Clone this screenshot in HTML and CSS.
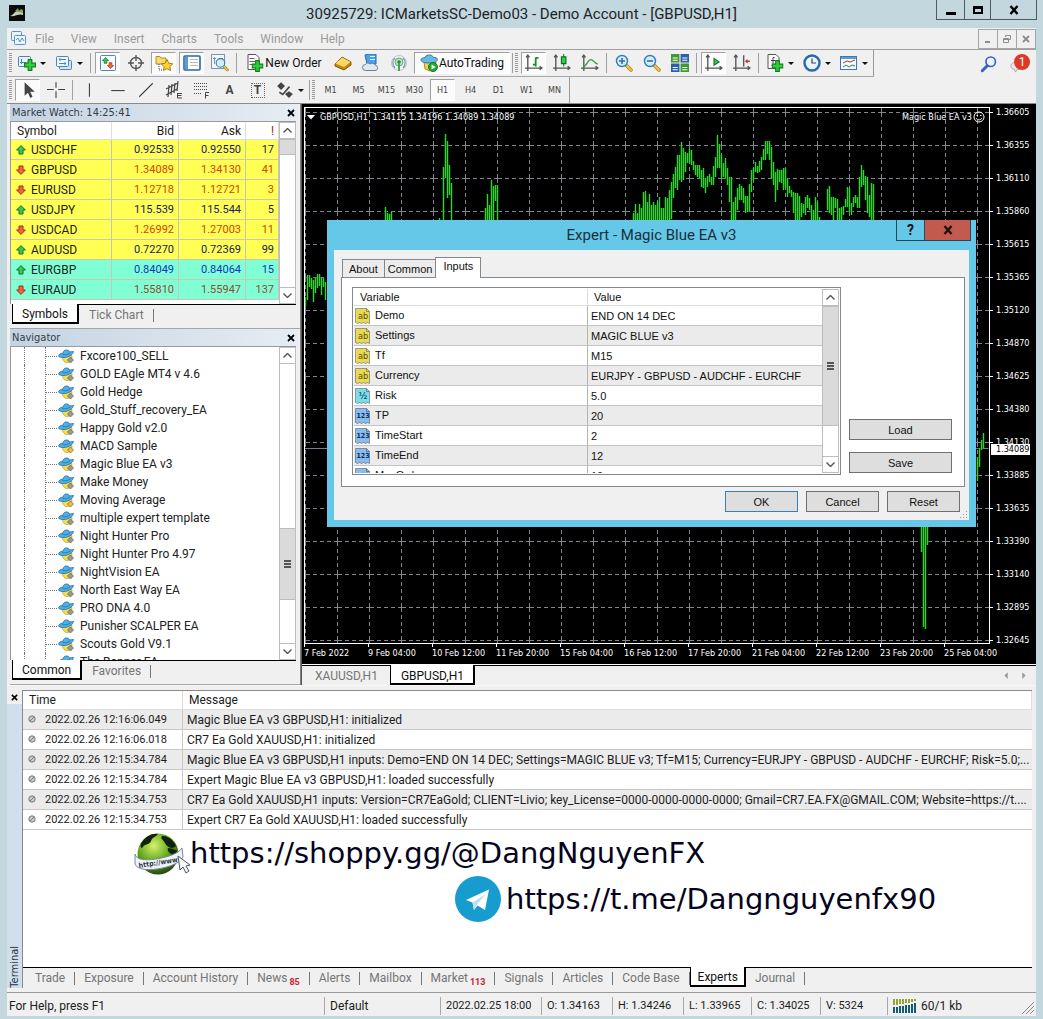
FILE: index.html
```html
<!DOCTYPE html>
<html lang="en">
<head>
<meta charset="utf-8">
<meta name="viewport" content="width=device-width, initial-scale=1">
<title>30925729: ICMarketsSC-Demo03 - Demo Account - [GBPUSD,H1]</title>
<link rel="stylesheet" href="styles.css">
</head>
<body>
<svg class="defs" aria-hidden="true">
  <defs>
    <symbol id="up" viewBox="0 0 10 10"><path d="M5 .6 9.4 5H7v4H3V5H.6z" fill="#3cc84a" stroke="#14702a"/></symbol>
    <symbol id="down" viewBox="0 0 10 10"><path d="M5 9.4 9.4 5H7V1H3v4H.6z" fill="#f4653a" stroke="#a82c14"/></symbol>
    <symbol id="ea" viewBox="0 0 16 14"><path d="M4 6c0 4 2 7 5 7s5-3 5-7z" fill="#f3dc4e" stroke="#b59a20" stroke-width=".7"/><path d="M.5 6.500C1 4.500 3 4 5 3.600 5.500 1 7 .5 8.500.5S11 1 11.500 2.500l4-.5c-.5 3-5 6-9.500 6-3 0-5-.5-5.500-1.500z" fill="#4fb0e8" stroke="#1f6f9e" stroke-width=".8"/><path d="M4.500 5c2.500.8 5 .2 7.500-1.500" fill="none" stroke="#1f6f9e" stroke-width=".8"/></symbol>
    <symbol id="diag" viewBox="0 0 16 14"><path d="m12.500 7.500 3 3-3 3-3-3z" fill="currentColor" stroke="#5f5f55" stroke-width=".7"/></symbol>
    <symbol id="scroll-up" viewBox="0 0 9 5"><path d="m.5 4.500 4-4 4 4" fill="none" stroke="#555" stroke-width="1.400"/></symbol>
    <symbol id="scroll-down" viewBox="0 0 9 5"><path d="m.5.5 4 4 4-4" fill="none" stroke="#555" stroke-width="1.400"/></symbol>
    <symbol id="x" viewBox="0 0 8 8"><path d="m1 1 6 6M7 1 1 7" stroke="currentColor" stroke-width="1.800"/></symbol>
    <symbol id="plus" viewBox="0 0 10 10"><path d="M3.500.5h3v3h3v3h-3v3h-3v-3h-3v-3h3z" fill="#2fd13c" stroke="#12801c"/></symbol>
    <symbol id="note" viewBox="0 0 16 16"><path d="M.5.5h11l3 3v12l-2-1-2 1-2-1-2 1-2-1-2 1-2-1z" fill="currentColor" stroke="#0005"/><path d="M11.500.5v3h3" fill="none" stroke="#0005"/></symbol>
    <symbol id="off" viewBox="0 0 8 8"><circle cx="4" cy="4" r="3.200" fill="#c8c8c8" stroke="#7d7d7d"/><path d="m2 6 4-4" stroke="#7d7d7d"/></symbol>
    <symbol id="glass" viewBox="0 0 18 18"><path d="m11 11 5 5" stroke="#a97a10" stroke-width="3.400" stroke-linecap="round"/><path d="m11 11 5 5" stroke="#f1c94b" stroke-width="2" stroke-linecap="round"/><circle cx="7" cy="7" r="5.500" fill="#d6ecfb" stroke="#2f7cc0" stroke-width="1.400"/></symbol>
    <symbol id="axes" viewBox="0 0 16 16"><path d="M2.500 1v14M0 12.500h15M1 3l1.500-2L4 3M13 11l2 1.500L13 14" fill="none" stroke="#555" stroke-width="1.200"/></symbol>
  </defs>
</svg>

<div class="window">
  <header class="titlebar">
    <svg class="app-icon" viewBox="0 0 16 16"><path fill="#0b0b0b" d="M0 0h16v16H0z"/><path d="M1 11c4-1 4-5 8-5l5-1v5c-4-2-8 2-13 1z" fill="#c8cfc0"/><path d="m6 6 3-3 1 3 2-2 2 1v3z" fill="#7ea052"/></svg>
    <h1>30925729: ICMarketsSC-Demo03 - Demo Account - [GBPUSD,H1]</h1>
    <div class="win-buttons">
      <button aria-label="Minimize"><svg viewBox="0 0 12 12"><path d="M1 8h10v3H1z"/></svg></button><button aria-label="Maximize"><svg viewBox="0 0 12 12"><path d="M1 2h10v8H1zm2 3v3h6V5z" fill-rule="evenodd"/></svg></button><button class="wide" aria-label="Close"><svg viewBox="0 0 12 12"><path d="m2.500 2 7 8m0-8-7 8" stroke="#000" stroke-width="2.400"/></svg></button>
    </div>
  </header>

  <nav class="menubar" aria-label="Main menu">
    <svg class="menu-icon" viewBox="0 0 15 15"><rect x=".5" y=".5" width="10" height="9" rx="1" fill="#eaf4fc" stroke="#5b93c4"/><rect x="3.500" y="4.500" width="11" height="9" rx="1" fill="#eaf4fc" stroke="#5b93c4"/><path d="m5 9 2-2 2 4 2-4 2 3" fill="none" stroke="#5b93c4"/></svg>
    <button>File</button><button>View</button><button>Insert</button><button>Charts</button><button>Tools</button><button>Window</button><button>Help</button>
    <div class="mdi-buttons">
      <button aria-label="Minimize chart"><svg viewBox="0 0 10 10"><path d="M2 7h5v2H2z"/></svg></button><button aria-label="Restore chart"><svg viewBox="0 0 10 10"><path d="M3.500 3V1.500h5v4H7M1.500 4.500h5v4h-5zM1.500 5.500h5" fill="none" stroke="#8d8d8d"/></svg></button><button aria-label="Close chart"><svg viewBox="0 0 10 10"><path d="m2 2 6 6m0-6L2 8" stroke="#8d8d8d" stroke-width="1.800"/></svg></button>
    </div>
  </nav>

  <div class="toolrow">
    <div class="toolbar">
      <i class="grip"></i>
      <button class="tb dd" aria-label="New chart"><svg viewBox="0 0 18 16"><rect x=".5" y="1.500" width="12" height="10" rx="1" fill="#e6f2fb" stroke="#4b86bd"/><path d="M3.500 4v5M2 7.500h6" stroke="#4b86bd"/><use href="#plus" x="6" y="4" width="12" height="12"/></svg></button>
      <button class="tb dd" aria-label="Profiles"><svg viewBox="0 0 18 16"><rect x="4.500" y="5.500" width="12" height="9" rx="1" fill="#cfe3f5" stroke="#4b86bd"/><rect x="1.500" y="1.500" width="12" height="10" rx="1" fill="#eef6fc" stroke="#4b86bd"/><path d="M4 4.500h7M4 8.500h7M5 3v3M10 7v3" stroke="#4b86bd"/></svg></button>
      <i class="sep"></i>
      <button class="tb on" aria-label="Market Watch"><svg viewBox="0 0 18 16"><rect x="1.500" y=".5" width="15" height="15" rx="1" fill="#f7fbff" stroke="#4b86bd"/><use href="#up" x="3" y="2" width="7" height="7"/><use href="#down" x="8" y="7" width="7" height="7"/></svg></button>
      <button class="tb" aria-label="Data Window"><svg viewBox="0 0 18 18"><circle cx="9" cy="9" r="5.500" fill="none" stroke="#555" stroke-width="1.400"/><path d="M9 1v6M9 11v6M1 9h6M11 9h6" stroke="#555" stroke-width="1.400"/></svg></button>
      <button class="tb on" aria-label="Navigator"><svg viewBox="0 0 18 18"><path d="M1 2.500h4l1 1.500h5v6H1z" fill="#f6dc70" stroke="#b8901c"/><path d="M4 10v6h3" fill="none" stroke="#444" stroke-dasharray="1 1"/><path d="m12 5.500 1.800 3.800 4 .5-3 2.800.8 4-3.600-2-3.600 2 .8-4-3-2.800 4-.5z" fill="#ffd23c" stroke="#b07c10"/></svg></button>
      <button class="tb on" aria-label="Terminal"><svg viewBox="0 0 18 16"><rect x="1" y="1" width="16" height="14" rx="1" fill="#fff" stroke="#2868a8" stroke-width="1.600"/><path d="M2 2h3v12H2z" fill="#5c9bd4"/><path d="M7 4.500h8M7 7.500h8M7 10.500h8" stroke="#bbb"/></svg></button>
      <button class="tb" aria-label="Strategy Tester"><svg viewBox="0 0 18 18"><rect x=".5" y=".5" width="13" height="14" fill="#f3f7fa" stroke="#7a94ab"/><path d="M2 4.500h3M8 4.500h4M3.500 3v7" stroke="#7a94ab"/><use href="#glass" x="4" y="3" width="14" height="15"/></svg></button>
      <i class="sep"></i>
      <button class="tb text order"><svg viewBox="0 0 17 18"><path d="M1.500.5h8l3 3v12h-11z" fill="#fff" stroke="#555"/><path d="M3 4.500h5M3 7.500h7M3 10.500h5" stroke="#666"/><use href="#plus" x="5" y="6" width="12" height="12"/></svg>New Order</button>
      <button class="tb" aria-label="MetaEditor"><svg viewBox="0 0 18 16"><path d="m1 9 7-7 9 5v3l-7 5-9-4z" fill="#c48512" stroke="#8a5a08"/><path d="m1.500 8.500 6.500-6 8.500 4.500-6.500 5z" fill="#ffd965"/></svg></button>
      <button class="tb" aria-label="MQL5 Cloud"><svg viewBox="0 0 18 18"><path d="m3 1 3-1h8v10H5z" fill="#49a2ea" stroke="#1f6cb0"/><path d="M8 2.500h5M8 5.500h5" stroke="#dff"/><path d="M3.500 16.500a3 3 0 0 1 0-6c1-2 3.500-2 4.500-.5 2-1.500 4.500-.5 5 1 3 0 4 5.500 0 5.500z" fill="#dfe7f0" stroke="#6a7f99"/></svg></button>
      <button class="tb" aria-label="Signals"><svg viewBox="0 0 18 18"><circle cx="9" cy="9" r="7.500" fill="#eef3f5" stroke="#b8c6cf"/><path d="M5 4a7 7 0 0 0 0 10M13 4a7 7 0 0 1 0 10" fill="none" stroke="#7f9cb4" stroke-width="1.300"/><circle cx="9" cy="8" r="4" fill="#bfe0c0" stroke="#6fae78"/><circle cx="9" cy="8" r="1.800" fill="#2a8f3c"/><path d="M9 9v8" stroke="#3fa64f" stroke-width="2"/></svg></button>
      <button class="tb text on auto"><svg viewBox="0 0 18 18"><path d="m4 8 1 7 5 2 5-4 1-5z" fill="#f1cf48" stroke="#b08d1e"/><path d="M1 6c0-2 2-2 4-2.500C6 1 8 1 9.500 1s3 .5 4 2.500c2 0 4 .5 4 2C17 8 13 9 9 9S1 8 1 6z" fill="#6ab7e4" stroke="#2f78a5"/><circle cx="13" cy="13" r="4.500" fill="#25a83a" stroke="#0f7a22"/><path d="m11.600 10.600 4 2.400-4 2.400z" fill="#fff"/></svg>AutoTrading</button>
      <i class="sep edge"></i>
      <i class="grip"></i>
      <button class="tb on" aria-label="Bar chart"><svg viewBox="0 0 16 16"><use href="#axes"/><path d="M9.500 3v8M9.500 3.500H12M7 9.500h2.500" stroke="#1c8a2c" stroke-width="1.600"/></svg></button>
      <button class="tb" aria-label="Candlesticks"><svg viewBox="0 0 16 16"><use href="#axes"/><path d="M9.500 0v11" stroke="#1c8a2c"/><path d="M7.500 2.500h4v6h-4z" fill="#2fce48" stroke="#12701f"/></svg></button>
      <button class="tb" aria-label="Line chart"><svg viewBox="0 0 16 16"><use href="#axes"/><path d="M2 11c3 0 4-6 6.500-6S12 8 15 9" fill="none" stroke="#3a9c4a" stroke-width="1.200"/></svg></button>
      <i class="sep"></i>
      <button class="tb" aria-label="Zoom in"><svg viewBox="0 0 18 18"><use href="#glass"/><path d="M4 7h6M7 4v6" stroke="#2f6fb4" stroke-width="1.600"/></svg></button>
      <button class="tb" aria-label="Zoom out"><svg viewBox="0 0 18 18"><use href="#glass"/><path d="M4 7h6" stroke="#2f6fb4" stroke-width="1.600"/></svg></button>
      <button class="tb" aria-label="Tile windows"><svg viewBox="0 0 16 16"><path d="M0 0h7.500v7.500H0zM8.500 8.500H16V16H8.500z" fill="#3f9a2e"/><path d="M8.500 0H16v7.500H8.500zM0 8.500h7.500V16H0z" fill="#2c5fae"/><path d="M1.500 3h4.500v1H1.500zm0 2h4.500v1H1.500zM10 3h4.500v1H10zm0 2h4.500v1H10zM1.500 11.500h4.500v1H1.500zm0 2h4.500v1H1.500zM10 11.500h4.500v1H10zm0 2h4.500v1H10z" fill="#fff"/></svg></button>
      <i class="sep"></i>
      <button class="tb on" aria-label="Auto scroll"><svg viewBox="0 0 16 16"><use href="#axes"/><path d="m8 4 4.500 3L8 10z" fill="#3fc455" stroke="#177a28"/></svg></button>
      <button class="tb" aria-label="Chart shift"><svg viewBox="0 0 16 16"><use href="#axes"/><path d="M9.500 1v10" stroke="#555" stroke-width="1.200"/><path d="M15 6.500h-3" stroke="#c0392b" stroke-width="1.400"/><path d="M10.500 6.500 13 4.500v4z" fill="#c0392b"/></svg></button>
      <i class="sep"></i>
      <button class="tb dd" aria-label="Indicators"><svg viewBox="0 0 17 18"><path d="M1.500.5h8l3 3v11h-11z" fill="#fff" stroke="#555"/><path d="M8 3.500H6.500v8H5M4.500 6.500h4" fill="none" stroke="#444"/><use href="#plus" x="5" y="6" width="12" height="12"/></svg></button>
      <button class="tb dd" aria-label="Periods"><svg viewBox="0 0 18 18"><circle cx="9" cy="9" r="7.500" fill="#e8f4fd" stroke="#2767ae" stroke-width="2.400"/><path d="M9 4.500V9h4" fill="none" stroke="#444" stroke-width="1.200"/></svg></button>
      <button class="tb dd" aria-label="Templates"><svg viewBox="0 0 18 16"><rect x=".5" y="1.500" width="16" height="13" fill="#f4faff" stroke="#4078ad"/><path d="M1 2h15v2H1z" fill="#5f9bd0"/><path d="m3 8 4-2 3 1 5-2" fill="none" stroke="#a04020"/><path d="m3 12 3-2 3 2 3-2 3 1" fill="none" stroke="#2b8a3a"/></svg></button>
    </div>
    <div class="tool-right">
      <button class="tb bare" aria-label="Search"><svg viewBox="0 0 16 16"><path d="m7 9-5 5" stroke="#3a62c4" stroke-width="2.600" stroke-linecap="round"/><circle cx="9.500" cy="6" r="4.200" fill="#eef4ff" stroke="#3a62c4" stroke-width="1.500"/></svg></button>
      <button class="tb bare bell" aria-label="Notifications"><svg viewBox="0 0 20 20"><path d="M1 12c0-3 3-4 6-4s6 1 6 4-3 4-5 4l-2 3-1-3c-2 0-4-1-4-4z" fill="#e4e6ea" stroke="#a8a8a8"/></svg><span class="badge">1</span></button>
    </div>
  </div>

  <div class="toolrow second">
    <div class="toolbar">
      <i class="grip"></i>
      <button class="tb on" aria-label="Cursor"><svg viewBox="0 0 16 16"><path d="M5 1v12l3-2.500 2 4.500 2-1-2-4.500h4z" fill="#444"/></svg></button>
      <button class="tb" aria-label="Crosshair"><svg viewBox="0 0 16 16"><path d="M8 1v5M8 9v6M0 7.500h6M10 7.500h6" stroke="#444"/></svg></button>
      <i class="sep"></i>
      <button class="tb" aria-label="Vertical line"><svg viewBox="0 0 16 16"><path d="M7.500 2v12" stroke="#444"/></svg></button>
      <button class="tb" aria-label="Horizontal line"><svg viewBox="0 0 16 16"><path d="M2 8.500h12" stroke="#444"/></svg></button>
      <button class="tb" aria-label="Trendline"><svg viewBox="0 0 16 16"><path d="m2 14 12-12" stroke="#444"/></svg></button>
      <button class="tb" aria-label="Equidistant channel"><svg viewBox="0 0 18 18"><path d="m1 8 12-6M1 14l11-6M4 4l-1 12M7 3 6 14M10 2 9 12M13 0l-1 10" stroke="#444" stroke-width="1.200"/><path d="M12.500 12v5H17M12.500 12.500H17M12.500 14.500h4" fill="none" stroke="#444"/></svg></button>
      <button class="tb" aria-label="Fibonacci retracement"><svg viewBox="0 0 18 18"><path d="M1 2.500h14M1 5.500h14M1 8.500h14M1 12.500h8" stroke="#444" stroke-dasharray="1 1"/><path d="M12.500 17.500v-6H16M12.500 14.500h3" fill="none" stroke="#444"/></svg></button>
      <button class="tb letter">A</button>
      <button class="tb letter"><span class="boxed">T</span></button>
      <button class="tb dd" aria-label="Arrows"><svg viewBox="0 0 16 16"><path d="M1 4.500 4.500 1 8 4.500 4.500 8zM15 11.500 11.500 15 8 11.500 11.500 9z" fill="#444"/><path d="m3 10 3 2 6-7" fill="none" stroke="#444" stroke-width="1.400"/></svg></button>
      <i class="sep edge"></i>
      <i class="grip"></i>
      <button class="tb tf">M1</button><button class="tb tf">M5</button><button class="tb tf">M15</button><button class="tb tf">M30</button><button class="tb tf on">H1</button><button class="tb tf">H4</button><button class="tb tf">D1</button><button class="tb tf">W1</button><button class="tb tf">MN</button>
    </div>
  </div>

  <div class="workspace">
    <aside class="dock">
      <section class="panel">
        <h2 class="caption"><span>Market Watch: 14:25:41</span><button aria-label="Close Market Watch"><svg viewBox="0 0 8 8"><use href="#x"/></svg></button></h2>
        <div class="panel-body market">
          <div class="quotes-box">
          <table class="quotes">
            <thead><tr><th>Symbol</th><th>Bid</th><th>Ask</th><th class="warn">!</th></tr></thead>
            <tbody>
              <tr class="rise"><td><svg><use href="#up"/></svg>USDCHF</td><td>0.92533</td><td>0.92550</td><td>17</td></tr>
              <tr class="fall"><td><svg><use href="#down"/></svg>GBPUSD</td><td>1.34089</td><td>1.34130</td><td>41</td></tr>
              <tr class="fall"><td><svg><use href="#down"/></svg>EURUSD</td><td>1.12718</td><td>1.12721</td><td>3</td></tr>
              <tr class="rise"><td><svg><use href="#up"/></svg>USDJPY</td><td>115.539</td><td>115.544</td><td>5</td></tr>
              <tr class="fall"><td><svg><use href="#down"/></svg>USDCAD</td><td>1.26992</td><td>1.27003</td><td>11</td></tr>
              <tr class="rise"><td><svg><use href="#up"/></svg>AUDUSD</td><td>0.72270</td><td>0.72369</td><td>99</td></tr>
              <tr class="rise cross"><td><svg><use href="#up"/></svg>EURGBP</td><td>0.84049</td><td>0.84064</td><td>15</td></tr>
              <tr class="fall cross"><td><svg><use href="#down"/></svg>EURAUD</td><td>1.55810</td><td>1.55947</td><td>137</td></tr>
            </tbody>
          </table>
          </div>
          <div class="scrollbar"><button aria-label="Scroll up"><svg><use href="#scroll-up"/></svg></button><i class="thumb small"></i><i class="track"></i><button aria-label="Scroll down"><svg><use href="#scroll-down"/></svg></button></div>
        </div>
        <div class="tabs"><button class="active">Symbols</button><button>Tick Chart</button></div>
      </section>

      <section class="panel grow">
        <h2 class="caption"><span>Navigator</span><button aria-label="Close Navigator"><svg viewBox="0 0 8 8"><use href="#x"/></svg></button></h2>
        <div class="panel-body navigator">
          <ul class="tree">
            <li><svg><use href="#ea"/><use href="#diag"/></svg>Fxcore100_SELL</li>
            <li><svg><use href="#ea"/><use href="#diag"/></svg>GOLD EAgle MT4 v 4.6</li>
            <li><svg><use href="#ea"/><use href="#diag"/></svg>Gold Hedge</li>
            <li><svg><use href="#ea"/><use href="#diag"/></svg>Gold_Stuff_recovery_EA</li>
            <li><svg><use href="#ea"/><use href="#diag"/></svg>Happy Gold v2.0</li>
            <li class="source"><svg><use href="#ea"/><use href="#diag"/></svg>MACD Sample</li>
            <li><svg><use href="#ea"/><use href="#diag"/></svg>Magic Blue EA v3</li>
            <li><svg><use href="#ea"/><use href="#diag"/></svg>Make Money</li>
            <li class="source"><svg><use href="#ea"/><use href="#diag"/></svg>Moving Average</li>
            <li><svg><use href="#ea"/><use href="#diag"/></svg>multiple expert template</li>
            <li><svg><use href="#ea"/><use href="#diag"/></svg>Night Hunter Pro</li>
            <li><svg><use href="#ea"/><use href="#diag"/></svg>Night Hunter Pro 4.97</li>
            <li><svg><use href="#ea"/><use href="#diag"/></svg>NightVision EA</li>
            <li><svg><use href="#ea"/><use href="#diag"/></svg>North East Way EA</li>
            <li><svg><use href="#ea"/><use href="#diag"/></svg>PRO DNA 4.0</li>
            <li><svg><use href="#ea"/><use href="#diag"/></svg>Punisher SCALPER EA</li>
            <li><svg><use href="#ea"/><use href="#diag"/></svg>Scouts Gold V9.1</li>
            <li><svg><use href="#ea"/><use href="#diag"/></svg>The Banner EA</li>
          </ul>
          <div class="scrollbar"><button aria-label="Scroll up"><svg><use href="#scroll-up"/></svg></button><i class="track above"></i><i class="thumb gripped"></i><i class="track"></i><button aria-label="Scroll down"><svg><use href="#scroll-down"/></svg></button></div>
        </div>
        <div class="tabs"><button class="active">Common</button><button>Favorites</button></div>
      </section>
    </aside>

    <main class="chart-pane">
      <div class="chart">
        <div class="plot">
          <svg class="plot-svg">
            <defs>
              <pattern id="grid" x="1" y="-28" width="32" height="33" patternUnits="userSpaceOnUse"><path d="M31.500 0v33M0 32.500h32" stroke="#7e8790" stroke-dasharray="4 3" fill="none"/></pattern>
              <path id="bars" fill="none" d="M306 297V306M308 275V300M310 275V287M312 278V289M314 280V302M316 278V293M318 274V288M320 274V286M322 278V295M324 278V287M326 282V300
              M386 207V220M388 213V220M390 214V220M392 212V220M440 218V222M444 167V220M446 134V178M448 141V198M450 165V195M452 183V220
              M486 208V220M488 194V220M490 205V220M492 180V220M494 186V220M496 185V201M498 185V220
              M634 213V220M636 204V220M638 213V220M640 204V220M642 208V220M644 192V220M646 191V220M648 202V220M650 194V220M652 205V220M654 202V220M656 205V220M658 202V220M660 197V220M662 208V220M664 208V220M666 197V220M668 198V220M670 190V220M672 182V219M674 174V198M676 167V188M678 155V190M680 155V180M682 142V182M684 148V180M686 152V172M688 153V163M690 149V163M692 150V165M694 161V170M696 165V175M698 165V177M700 165V178M702 170V187M704 168V188M706 178V193M708 176V187M710 174V182M712 177V185M714 166V185M716 157V177M718 135V168M720 144V168M722 155V178M724 163V177M726 158V178M728 168V185M730 177V202M732 177V220M734 202V220M736 197V220M738 188V210M740 184V200M742 186V200M744 188V203M746 196V213M748 196V212M750 184V212M752 170V192M754 168V180M756 162V172M758 166V173M760 161V172M762 157V170M764 149V160M766 141V160M768 141V154M770 141V160M772 147V178M774 162V185M776 172V202M778 169V190M780 170V182M782 170V183M784 168V190M786 168V188M788 178V197M790 186V193M792 190V197M794 192V213M796 193V220M798 193V220M800 196V220M802 203V217M804 204V213M806 197V215M808 195V208M810 198V210M812 205V220M814 210V220M816 197V220M818 202V220M820 217V220M828 189V210M830 186V213M832 197V215M834 197V220M836 198V208M838 199V220M840 208V220M842 207V220M844 206V215M846 199V207M848 187V207M850 188V212M852 203V215M854 197V207M856 195V203M858 197V208M860 177V208M862 165V187M864 170V185M866 176V200M868 177V213M870 195V217M872 183V220M874 184V220
              M922 520V552M924 520V627M926 526V629M928 520V545M978 457V481M980 448V467M982 440V450M984 433V448"/>
            </defs>
            <rect width="100%" height="100%" fill="url(#grid)"/>
            <g transform="translate(-305.500 -108)">
              <path stroke="#77808a" d="M305 448.500H989"/>
              <use href="#bars" stroke="#075c07" stroke-width="2"/>
              <use href="#bars" stroke="#22dd22"/>
            </g>
          </svg>
          <p class="ohlc"><svg viewBox="0 0 8 5"><path d="M0 0h8L4 4.500z" fill="#fff"/></svg><span>GBPUSD,H1</span><span>1.34115 1.34196 1.34089 1.34089</span></p>
          <p class="ea-name">Magic Blue EA v3<svg viewBox="0 0 12 12"><circle cx="6" cy="6" r="5" fill="none" stroke="#fff"/><path d="M3.500 4.500h1.500M7 4.500h1.500M3 7c1.500 2.500 4.500 2.500 6 0" fill="none" stroke="#fff"/></svg></p>
        </div>
        <div class="prices">
          <span>1.36605</span><span>1.36355</span><span>1.36110</span><span>1.35860</span><span>1.35615</span><span>1.35365</span><span>1.35120</span><span>1.34870</span><span>1.34625</span><span>1.34380</span><span>1.34130</span><span>1.33885</span><span>1.33635</span><span>1.33390</span><span>1.33140</span><span>1.32895</span><span>1.32645</span>
          <b class="last">1.34089</b>
        </div>
        <div class="dates">
          <span>7 Feb 2022</span><span>9 Feb 04:00</span><span>10 Feb 12:00</span><span>11 Feb 20:00</span><span>15 Feb 04:00</span><span>16 Feb 12:00</span><span>17 Feb 20:00</span><span>21 Feb 04:00</span><span>22 Feb 12:00</span><span>23 Feb 20:00</span><span>25 Feb 04:00</span>
        </div>
      </div>
      <div class="tabs chart-tabs"><button>XAUUSD,H1</button><button class="active">GBPUSD,H1</button>
        <div class="pager"><button aria-label="Previous"><svg viewBox="0 0 6 8"><path d="M5 1v6L2 4z"/></svg></button><button aria-label="Next"><svg viewBox="0 0 6 8"><path d="M1 1v6l3-3z"/></svg></button></div>
      </div>

      <div class="dialog" role="dialog" aria-labelledby="dlg-title">
        <header class="dlg-title"><h2 id="dlg-title">Expert - Magic Blue EA v3</h2>
          <div class="dlg-buttons"><button>?</button><button class="close" aria-label="Close"><svg viewBox="0 0 12 12"><path d="m2.500 2 7 8m0-8-7 8" stroke="#1d1210" stroke-width="2.400"/></svg></button></div>
        </header>
        <div class="dlg-body">
          <div class="dlg-tabs"><button>About</button><button>Common</button><button class="active">Inputs</button></div>
          <div class="dlg-page">
            <div class="inputs-box">
              <div class="inputs-scroll">
                <table class="inputs">
                  <thead><tr><th>Variable</th><th>Value</th></tr></thead>
                  <tbody>
                    <tr><td><span class="kind str"><svg><use href="#note"/></svg><em>ab</em></span>Demo</td><td>END ON 14 DEC</td></tr>
                    <tr><td><span class="kind str"><svg><use href="#note"/></svg><em>ab</em></span>Settings</td><td>MAGIC BLUE v3</td></tr>
                    <tr><td><span class="kind str"><svg><use href="#note"/></svg><em>ab</em></span>Tf</td><td>M15</td></tr>
                    <tr><td><span class="kind str"><svg><use href="#note"/></svg><em>ab</em></span>Currency</td><td>EURJPY - GBPUSD - AUDCHF - EURCHF</td></tr>
                    <tr><td><span class="kind dbl"><svg><use href="#note"/></svg><em>½</em></span>Risk</td><td>5.0</td></tr>
                    <tr><td><span class="kind int"><svg><use href="#note"/></svg><em>123</em></span>TP</td><td>20</td></tr>
                    <tr><td><span class="kind int"><svg><use href="#note"/></svg><em>123</em></span>TimeStart</td><td>2</td></tr>
                    <tr><td><span class="kind int"><svg><use href="#note"/></svg><em>123</em></span>TimeEnd</td><td>12</td></tr>
                    <tr><td><span class="kind int"><svg><use href="#note"/></svg><em>123</em></span>MaxOrders</td><td>10</td></tr>
                  </tbody>
                </table>
              </div>
              <div class="scrollbar"><button aria-label="Scroll up"><svg><use href="#scroll-up"/></svg></button><i class="thumb gripped long"></i><i class="track"></i><button aria-label="Scroll down"><svg><use href="#scroll-down"/></svg></button></div>
            </div>
            <div class="side-buttons"><button class="push">Load</button><button class="push">Save</button></div>
          </div>
          <footer class="dlg-footer"><button class="push default">OK</button><button class="push">Cancel</button><button class="push">Reset</button></footer>
          <svg class="dlg-grip" viewBox="0 0 9 9"><path d="M7 1h1v1H7zM4 4h1v1H4zM7 4h1v1H7zM1 7h1v1H1zM4 7h1v1H4zM7 7h1v1H7z" fill="#999"/></svg>
        </div>
      </div>
    </main>
  </div>

  <section class="terminal">
    <div class="rail"><button aria-label="Close Terminal"><svg viewBox="0 0 8 8"><use href="#x"/></svg></button><div class="rail-name"><span>Terminal</span></div></div>
    <div class="terminal-main">
      <div class="log-area">
        <table class="log">
          <thead><tr><th>Time</th><th>Message</th></tr></thead>
          <tbody>
            <tr><td><svg><use href="#off"/></svg>2022.02.26 12:16:06.049</td><td>Magic Blue EA v3 GBPUSD,H1: initialized</td></tr>
            <tr><td><svg><use href="#off"/></svg>2022.02.26 12:16:06.018</td><td>CR7 Ea Gold XAUUSD,H1: initialized</td></tr>
            <tr><td><svg><use href="#off"/></svg>2022.02.26 12:15:34.784</td><td>Magic Blue EA v3 GBPUSD,H1 inputs: Demo=END ON 14 DEC; Settings=MAGIC BLUE v3; Tf=M15; Currency=EURJPY - GBPUSD - AUDCHF - EURCHF; Risk=5.0;...</td></tr>
            <tr><td><svg><use href="#off"/></svg>2022.02.26 12:15:34.784</td><td>Expert Magic Blue EA v3 GBPUSD,H1: loaded successfully</td></tr>
            <tr><td><svg><use href="#off"/></svg>2022.02.26 12:15:34.753</td><td>CR7 Ea Gold XAUUSD,H1 inputs: Version=CR7EaGold; CLIENT=Livio; key_License=0000-0000-0000-0000; Gmail=CR7.EA.FX@GMAIL.COM; Website=https://t....</td></tr>
            <tr><td><svg><use href="#off"/></svg>2022.02.26 12:15:34.753</td><td>Expert CR7 Ea Gold XAUUSD,H1: loaded successfully</td></tr>
          </tbody>
        </table>
        <div class="links">
          <a class="link shop" href="https://shoppy.gg/@DangNguyenFX">
            <svg viewBox="0 0 58 46"><defs><radialGradient id="globe" cx=".4" cy=".3" r=".8"><stop offset="0" stop-color="#d8f26a"/><stop offset=".5" stop-color="#5fa51c"/><stop offset="1" stop-color="#16300a"/></radialGradient></defs><circle cx="26" cy="24" r="20.500" fill="url(#globe)"/><path d="M10 12c4-6 10-9 16-8-2 3-6 3-7 7s-6 2-9 7c-2 0-2-4 0-6zM30 6c6-1 12 5 14 10-4 4-9 1-11-3s-5-4-3-7zM36 18c3 0 6 1 9 3-1 4-4 5-6 3s-4-3-3-6z" fill="#11240b"/><path d="M3 24c1 5 8 7 21 5s23-6 26-11l1 9c-3 6-13 10-26 12S3 38 3 33z" fill="#eef3f8" stroke="#7d8894"/><text x="7" y="38" class="www" transform="rotate(-9 7 38)">http://www</text><path d="m46 26 2 14 3-3 3 6 3-2-3-5 4-1z" fill="#f4f6f8" stroke="#4a5666"/></svg>
            <span>https://shoppy.gg/@DangNguyenFX</span></a>
          <a class="link tg" href="https://t.me/Dangnguyenfx90">
            <svg viewBox="0 0 46 46"><circle cx="23" cy="23" r="23" fill="#179cd0"/><path d="M11 24 34 13.500 30 34l-7.500-4.500-3.500 4.500-1.500-7.500z" fill="#fff"/><path d="M17.500 26.500 31 18 22 28.500 19 34z" fill="#bfe0ef"/></svg>
            <span>https://t.me/Dangnguyenfx90</span></a>
        </div>
      </div>
      <div class="tabs terminal-tabs"><button>Trade</button><button>Exposure</button><button>Account History</button><button>News<sub>85</sub></button><button>Alerts</button><button>Mailbox</button><button>Market<sub>113</sub></button><button>Signals</button><button>Articles</button><button>Code Base</button><button class="active">Experts</button><button>Journal</button></div>
    </div>
  </section>

  <footer class="statusbar">
    <span>For Help, press F1</span><span>Default</span><span class="num">2022.02.25 18:00</span><span class="num">O: 1.34163</span><span class="num">H: 1.34246</span><span class="num">L: 1.33965</span><span class="num">C: 1.34025</span><span class="num">V: 5324</span>
    <span class="net"><svg viewBox="0 0 24 14"><path d="M1 0v6M4 0v6M7 0v5M10 0v5M13 0v4M16 0v4M19 0v3M22 0v2" stroke="#93a52c" stroke-width="2"/><path d="M1 8v6M4 8v6M7 7v7M10 7v7M13 6v8M16 6v8M19 5v9M22 4v10" stroke="#0f5c74" stroke-width="2"/></svg>60/1 kb</span>
    <svg class="size-grip" viewBox="0 0 14 14"><path d="M13 1 1 13M13 5l-8 8M13 9l-4 4" stroke="#888"/></svg>
  </footer>
</div>
</body>
</html>
```
FILE: styles.css
```css
* { box-sizing: border-box; }
body, h1, h2, p, ul { margin: 0; padding: 0; }
body { background: #c3d7df; color: #1c1c1c; font: 12px/16px Roboto, "Open Sans", sans-serif; }
button { margin: 0; padding: 0; border: 0; background: none; color: inherit; font: inherit; }
table { border-collapse: separate; border-spacing: 0; table-layout: fixed; width: 100%; }
svg { display: block; flex: none; }
.defs { position: absolute; width: 0; height: 0; }

.window { display: flex; flex-direction: column; min-height: 100vh; padding: 0 7px 3px; }

/* title and menu */
.titlebar { display: grid; grid-template-columns: 1fr auto 1fr; align-items: start; height: 28px; }
.app-icon { width: 16px; height: 16px; margin: 5px 0 0 2px; }
.titlebar h1 { font-size: 15px; line-height: 28px; font-weight: 400; color: #1b2428; }
.win-buttons { display: flex; justify-self: end; margin-right: -1px; border: 1px solid #4c5a61; border-top: 0; }
.win-buttons button { display: grid; place-items: center; width: 27px; height: 19px; }
.win-buttons button + button { border-left: 1px solid #4c5a61; width: 26px; }
.win-buttons button.wide { width: 46px; }
.win-buttons svg { width: 12px; height: 12px; }
.menubar { display: flex; align-items: center; height: 22px; padding-left: 4px; background: #f0f0f0; border-bottom: 1px solid #a0a0a0; color: #9b9b9b; }
.menu-icon { width: 15px; height: 15px; }
.menubar > button { padding: 0 8px 0 9px; }
.mdi-buttons { display: flex; margin-left: auto; border: 1px solid #a5a5a5; }
.mdi-buttons button { display: grid; place-items: center; width: 18px; height: 18px; }
.mdi-buttons button + button { border-left: 1px solid #a5a5a5; width: 19px; }
.mdi-buttons svg { width: 10px; height: 10px; fill: #8d8d8d; }

/* toolbars */
.toolrow { display: flex; justify-content: space-between; height: 27px; background: #f0f0f0; }
.toolrow.second { border-bottom: 1px solid #8a8a8a; }
.toolbar { display: flex; align-items: center; gap: 3px; padding: 0 2px; border-right: 1px solid #9a9a9a; border-bottom: 1px solid #a8a8a8; }
.second .toolbar { border-bottom: 0; }
.grip { width: 3px; height: 20px; background: repeating-linear-gradient(#9a9a9a 0 1px, transparent 1px 2px); }
.sep { width: 1px; height: 20px; margin: 0 1px; background: #a0a0a0; }
.sep.edge { margin: 0 -1px; }
.tb { display: flex; align-items: center; justify-content: center; flex: none; width: 25px; height: 22px; border: 1px solid transparent; }
.tb svg { width: 18px; height: 18px; }
.tb.on { background: #fbfbfb; border-color: #a0a0a0 #fff #fff #a0a0a0; }
.tb.dd { width: 34px; justify-content: flex-start; gap: 4px; padding-left: 2px; }
.tb.dd::after { content: ""; border: 3px solid transparent; border-top-color: #111; border-bottom: 0; }
.tb.text { gap: 1px; color: #111; }
.tb.order { width: 86px; }
.tb.auto { width: 96px; }
.tb.letter { color: #444; font: 700 12px/16px Roboto, sans-serif; }
.boxed { width: 14px; line-height: 13px; border: 1px dotted #666; }
.tb.tf { color: #444; font: 9px/16px "DejaVu Sans Condensed", "DejaVu Sans", sans-serif; }
.tool-right { display: flex; align-items: center; gap: 5px; padding-right: 5px; }
.bell { position: relative; }
.badge { position: absolute; top: 0; left: 7px; width: 16px; border-radius: 8px; background: #dd3a26; color: #fff; font-size: 12px; line-height: 16px; }

/* workspace */
.workspace { display: flex; flex: 2 0 581px; background: #f0f0f0; }
.dock { display: flex; flex-direction: column; flex: none; width: 294px; padding-left: 3px; border-right: 1px solid #808080; }
.panel { display: flex; flex-direction: column; padding-right: 4px; border-bottom: 1px solid #a6a6a6; }
.panel.grow { flex: 1 0 0; min-height: 0; }
.panel:first-child { height: 225px; }
.caption { display: flex; align-items: center; justify-content: space-between; height: 17px; margin-right: -2px; padding: 0 3px 0 2px; background: linear-gradient(90deg, #c4d3e2, #e6edf4); color: #333c48; font: 400 11px/16px "DejaVu Sans Condensed", "DejaVu Sans", sans-serif; }
.caption svg { width: 8px; height: 8px; color: #000; }
.panel-body { display: flex; flex: 1; min-height: 0; overflow: hidden; border-top: 1px solid #999; border-left: 1px solid #999; background: #fff; }

.quotes-box { flex: 1; overflow: hidden; }
.quotes th, .quotes td { height: 20px; padding: 0 4px 0 0; text-align: right; font-weight: 400; border-right: 1px solid #c4c4c4; border-bottom: 1px solid #c9c9b0; line-height: 16px; }
.quotes th { height: 18px; border-color: #dedede; }
.quotes th:nth-child(1) { width: 101px; text-align: left; padding-left: 6px; }
.quotes th:nth-child(2) { width: 67px; }
.quotes th:nth-child(3) { width: 67px; }
.quotes th.warn { color: #a02020; }
.quotes td:first-child { padding-left: 5px; text-align: left; }
.quotes td svg { display: inline-block; width: 10px; height: 10px; margin-right: 5px; vertical-align: -1px; }
.quotes tbody tr { background: #ffff54; }
.quotes tbody .cross { background: #80ffd4; }
.quotes .rise td + td { color: #1a1a60; }
.quotes .rise.cross td + td { color: #0b35c8; }
.quotes .fall td + td { color: #d8410a; }
.quotes .fall.cross td + td { color: #9a4632; }
.quotes td + td, .statusbar .num, .log td:first-child { font-size: 11px; }

.scrollbar { display: flex; flex-direction: column; flex: none; width: 17px; border: solid #bdbdbd; border-width: 0 1px; background: #fff; }
.scrollbar button { display: grid; place-items: center; height: 17px; border: solid #bdbdbd; border-width: 1px 0; }
.scrollbar button svg { width: 9px; height: 5px; }
.track { flex: 1; }
.thumb { display: grid; place-items: center; height: 72px; background: #dadada; border: solid #bdbdbd; border-width: 1px 0; }
.thumb.small { height: 16px; }
.thumb.long { height: 120px; }
.thumb.gripped::after { content: ""; width: 7px; height: 8px; background: repeating-linear-gradient(#555 0 2px, transparent 2px 3px); }
.track.above { flex: 0 0 164px; }

.tree { flex: 1; list-style: none; padding: 0 0 0 14px; color: #222; }
.tree li { display: flex; align-items: center; gap: 6px; height: 18px; white-space: nowrap; margin-left: -1px; padding-left: 21px; border-left: 1px dotted #777; position: relative; }
.tree li svg { width: 16px; height: 15px; margin-left: 12px; color: #9a9a94; }
.tree li.source svg { color: #f0c22c; }
.tree li::before { content: ""; position: absolute; left: 20px; top: 0; width: 11px; height: 18px; border-left: 1px dotted #777; background: linear-gradient(90deg, #777 50%, transparent 50%) 0 9px / 2px 1px repeat-x; }

.tabs { display: flex; flex: none; height: 24px; border-top: 1px solid #000; background: #f0f0f0; color: #757575; }
.tabs > button { position: relative; height: 19px; padding: 0 10px; }
.tabs > button:not(.active)::after { content: ""; position: absolute; right: 0; top: 4px; height: 13px; border-right: 1px solid #777; }
.tabs > .active { height: 20px; margin-top: -1px; padding: 1px 9px 0; background: #fff; color: #111; border: solid #000; border-width: 0 2px 2px 1px; }
.dock .tabs { margin-left: 2px; }

/* chart */
.chart-pane { position: relative; display: flex; flex-direction: column; flex: 1; min-width: 0; border-left: 1px solid #555; }
.chart { display: grid; grid-template: minmax(0, 1fr) 21px / minmax(0, 1fr) 46px; flex: 1 0 0; min-height: 0; padding: 3px 0 0 2px; background: #000; overflow: hidden; color: #fff; font: 9px/11px "DejaVu Sans Condensed", "DejaVu Sans", sans-serif; }
.plot { position: relative; border: 1px solid #fff; }
.plot-svg { width: 100%; height: 100%; }
.ohlc { position: absolute; top: 4px; left: 2px; display: flex; align-items: center; gap: 5px; }
.ohlc svg { width: 8px; height: 5px; }
.ea-name { position: absolute; top: 3px; right: 4px; display: flex; align-items: center; gap: 1px; }
.ea-name svg { width: 12px; height: 12px; }
.prices { position: relative; }
.prices span { display: flex; align-items: center; gap: 3px; height: 11px; margin-bottom: 22px; }
.prices span:nth-last-of-type(1) { margin-bottom: 0; }
.prices span::before { content: ""; width: 3px; height: 1px; background: #fff; }
.prices .last { position: absolute; top: 337px; left: 1px; padding: 0 1px 0 5px; background: #fff; color: #000; font-weight: 400; }
.dates { grid-column: 1 / -1; display: flex; }
.dates span { flex: none; width: 64px; padding-top: 4px; white-space: nowrap; background: linear-gradient(#fff, #fff) 0 0 / 1px 3px no-repeat; }
.chart-tabs { height: 20px; padding-left: 1px; box-shadow: 0 -1px #fff; }
.chart-tabs > button { padding: 0 12px; }
.chart-tabs > button:not(.active)::after { display: none; }
.chart-tabs > .active { padding: 3px 9px 0 10px; }
.pager { display: flex; gap: 12px; margin: 0 8px 0 auto; }
.pager svg { width: 7px; height: 9px; fill: #999; }

/* dialog */
.dialog { position: absolute; left: 25px; top: 116px; width: 649px; padding: 0 7px 7px; background: #66c8e8; font: 11px/16px "Liberation Sans", Arial, sans-serif; color: #111; }
.dlg-title { display: grid; grid-template-columns: 1fr auto 1fr; height: 30px; font-family: Roboto, sans-serif; }
.dlg-title h2 { grid-column: 2; font-size: 15px; line-height: 30px; font-weight: 400; color: #1a3038; }
.dlg-buttons { display: flex; justify-self: end; height: 21px; margin-right: -2px; border: 1px solid #244a5a; border-top: 0; font: 700 14px/18px Roboto, sans-serif; }
.dlg-buttons button { display: grid; place-items: center; width: 27px; }
.dlg-buttons .close { width: 46px; background: #c25a50; border-left: 1px solid #244a5a; }
.dlg-buttons svg { width: 12px; height: 12px; }
.dlg-body { position: relative; padding: 7px 4px 8px 7px; background: #f0f0f0; }
.dlg-tabs { display: flex; align-items: flex-end; padding-left: 1px; }
.dlg-tabs button { height: 18px; padding: 0 6px; border: 1px solid #828790; border-bottom: 0; background: #ececec; }
.dlg-tabs button + button { margin-left: -1px; padding: 0 3px; }
.dlg-tabs button.active { position: relative; height: 21px; margin-bottom: -1px; padding: 0 7px 4px; background: #fff; }
.dlg-page { display: flex; gap: 8px; padding: 9px 12px 11px 10px; border: 1px solid #828790; background: #fff; }
.inputs-box { display: flex; flex: 1; height: 188px; padding: 1px; border: 1px solid #828790; }
.inputs-scroll { flex: 1; overflow: hidden; }
.inputs th, .inputs td { padding: 0 3px; font-weight: 400; text-align: left; white-space: nowrap; }
.inputs th { height: 17px; padding-left: 6px; border-bottom: 1px solid #ddd; }
.inputs td { height: 20px; line-height: 16px; border-bottom: 1px solid #c4c4c4; }
.inputs th:first-child { width: 50%; border-right: 1px solid #ddd; }
.inputs td:first-child { padding-left: 1px; border-right: 1px solid #b5b5b5; }
.inputs tr:nth-child(even) td { background: #ebebeb; }
.kind { display: inline-block; position: relative; width: 16px; height: 16px; margin-right: 4px; vertical-align: middle; }
.kind svg { position: absolute; width: 16px; height: 16px; }
.kind em { position: relative; display: block; text-align: center; font: 700 9px/17px "DejaVu Sans Condensed", sans-serif; }
.str { color: #e8d95a; }
.str em { color: #5c4c00; font-weight: 400; }
.dbl { color: #7fdbe8; }
.dbl em { color: #0b5a70; }
.int { color: #8bbcf0; }
.int em { color: #06305e; font-size: 7px; }
.side-buttons { display: flex; flex-direction: column; justify-content: flex-end; gap: 12px; width: 103px; padding-bottom: 2px; }
.push { height: 21px; border: 1px solid #707070; background: #dedede; text-align: center; }
.push.default { border-color: #3c7fb1; }
.dlg-footer { display: flex; justify-content: flex-end; gap: 8px; padding: 4px 5px 0 0; }
.dlg-footer .push { width: 73px; }
.dlg-grip { position: absolute; right: 1px; bottom: 1px; width: 9px; height: 9px; }

/* terminal */
.terminal { display: flex; flex: 1 0 307px; background: #f0f0f0; padding: 4px 4px 4px 0; border-top: 1px solid #f8f8f8; }
.rail { display: flex; flex-direction: column; flex: none; width: 15px; }
.rail > button { display: grid; place-items: center; height: 14px; }
.rail svg { width: 7px; height: 7px; color: #000; }
.rail-name { display: flex; align-items: flex-end; justify-content: center; flex: 1; background: #cfdfeb; }
.rail-name span { writing-mode: vertical-rl; transform: rotate(180deg); font: 11px/13px "DejaVu Sans Condensed", "DejaVu Sans", sans-serif; color: #2b3540; }
.terminal-main { display: flex; flex-direction: column; flex: 1; min-width: 0; border: solid #8a8a8a; border-width: 1px 0 0 1px; background: #fff; }
.log-area { flex: 1; min-height: 0; }
.log th, .log td { height: 20px; padding: 0 4px; text-align: left; font-weight: 400; border-bottom: 1px solid #c8c8c8; white-space: nowrap; overflow: hidden; line-height: 16px; }
.log th { height: 19px; padding-left: 6px; border-color: #ddd; border-right: 1px solid #ddd; }
.log th:first-child { width: 160px; }
.log td:first-child { padding-left: 5px; border-right: 1px solid #c8c8c8; }
.log td svg { display: inline-block; width: 8px; height: 8px; margin-right: 9px; }
.log tbody tr:nth-child(odd) { background: #ebebeb; }
.links { padding-left: 109px; }
.link { display: flex; align-items: center; width: fit-content; color: #04041c; text-decoration: none; font: 29px/46px "DejaVu Sans", sans-serif; }
.link.shop svg { width: 58px; height: 46px; }
.link.tg { margin-left: 323px; gap: 5px; }
.link.tg svg { width: 46px; height: 46px; }
.www { font: 700 7px "DejaVu Sans Condensed", sans-serif; fill: #2c3846; }
.terminal-tabs { height: 21px; padding-left: 3px; }
.terminal-tabs > button { padding: 0 10px 0 9px; }
.terminal-tabs > .active { padding: 1px 6px 0 7px; }
.terminal-tabs sub { vertical-align: -3px; color: #d02030; font: 700 9px/0 Roboto, sans-serif; margin-left: 2px; }

/* status bar */
.statusbar { position: relative; display: grid; grid-template-columns: minmax(120px, 1fr) 116px 101px 71px 71px 68px 69px 67px 149px; align-items: center; height: 24px; padding-top: 2px; border-top: 1px solid #9a9a9a; background: #f0f0f0; }
.statusbar span { padding-left: 5px; line-height: 18px; white-space: nowrap; border-left: 1px solid #a8a8a8; }
.statusbar span:first-child { border: 0; padding-left: 2px; }
.net { display: flex; align-items: center; gap: 4px; }
.net svg { width: 24px; height: 14px; }
.size-grip { position: absolute; right: 1px; bottom: 1px; width: 14px; height: 14px; }
```
